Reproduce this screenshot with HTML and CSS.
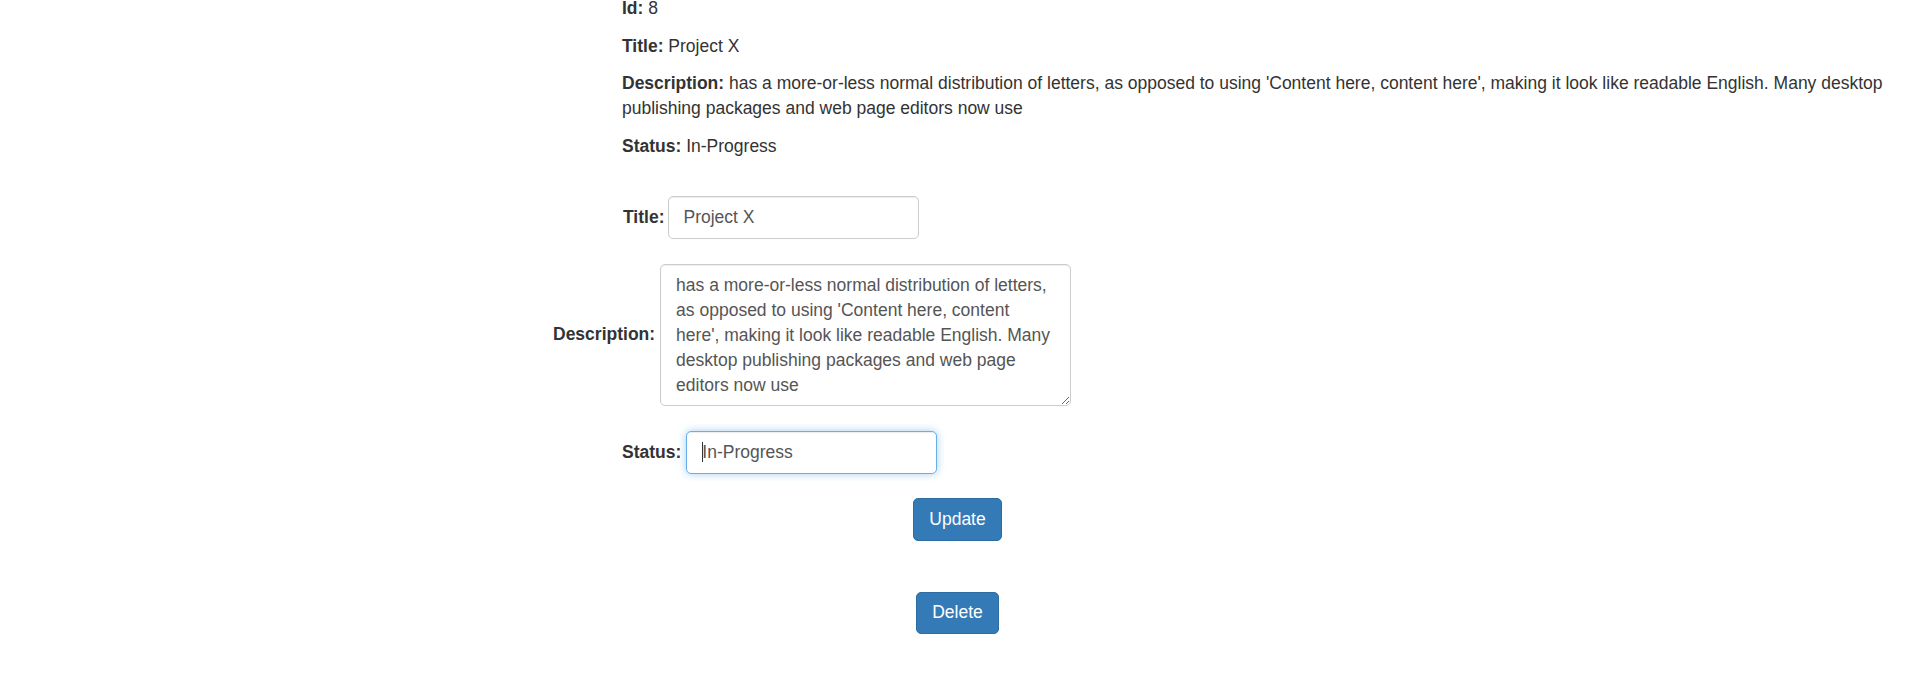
FILE: index.html
```html
<!DOCTYPE html>
<html lang="en">
<head>
<meta charset="utf-8">
<title>Project Details</title>
<link rel="stylesheet" href="styles.css">
</head>
<body>
<div class="page">
  <div class="info">
    <p><strong>Id:</strong> 8</p>
    <p><strong>Title:</strong> Project X</p>
    <p><strong>Description:</strong> has a more-or-less normal distribution of letters, as opposed to using 'Content here, content here', making it look like readable English. Many desktop publishing packages and web page editors now use</p>
    <p><strong>Status:</strong> In-Progress</p>
  </div>
  <form class="edit">
    <div class="field field-title">
      <label class="lbl" for="title">Title:</label>
      <input class="ctrl ctrl-short" id="title" type="text" value="Project X">
    </div>
    <div class="field field-desc">
      <label class="lbl" for="desc">Description:</label>
      <textarea class="ctrl ctrl-area" id="desc" rows="5">has a more-or-less normal distribution of letters, as opposed to using 'Content here, content here', making it look like readable English. Many desktop publishing packages and web page editors now use</textarea>
    </div>
    <div class="field field-status">
      <label class="lbl" for="status">Status:</label>
      <span class="focus-wrap">
        <input class="ctrl ctrl-short ctrl-focus" id="status" type="text" value="In-Progress">
        <span class="caret"></span>
      </span>
    </div>
    <div class="actions actions-update">
      <button class="btn" type="button">Update</button>
    </div>
    <div class="actions actions-delete">
      <button class="btn" type="button">Delete</button>
    </div>
  </form>
</div>
</body>
</html>
```

FILE: styles.css
```css
* { box-sizing: border-box; }
html, body {
  margin: 0;
  padding: 0;
  background: #fff;
}
body {
  font-family: "Liberation Sans", Arial, Helvetica, sans-serif;
  font-size: 17.5px;
  line-height: 25px;
  color: #333;
}
.page {
  width: 1915px;
}
.info {
  margin-left: 622px;
  width: 1280px;
  margin-top: -4px;
}
.info p {
  margin: 0 0 12.5px 0;
}
.info strong { font-weight: bold; }

.edit {
  display: flex;
  flex-direction: column;
  align-items: flex-start;
  margin-top: 37.5px;
}
.field {
  display: flex;
  align-items: center;
}
.lbl {
  font-weight: bold;
  color: #333;
}
.field-title { margin-left: 623px; gap: 3px; }
.field-desc { margin-left: 553px; gap: 5px; margin-top: 25.5px; }
.field-status { margin-left: 622px; gap: 5px; margin-top: 25.5px; }

.ctrl {
  font-family: "Liberation Sans", Arial, Helvetica, sans-serif;
  font-size: 17.5px;
  line-height: 25px;
  color: #555;
  background: #fff;
  border: 1.25px solid #ccc;
  border-radius: 5px;
  padding: 7.5px 15px;
  box-shadow: inset 0 1px 1px rgba(0,0,0,0.075);
  outline: none;
  margin: 0;
}
.ctrl-short {
  width: 251px;
  height: 42.5px;
  display: block;
}
.ctrl-area {
  width: 411px;
  height: 141.5px;
  display: block;
}
.ctrl-focus {
  border-color: #66afe9;
  box-shadow: inset 0 1px 1px rgba(0,0,0,0.075), 0 0 8px rgba(102,175,233,0.6);
}
.focus-wrap {
  position: relative;
  display: block;
}
.caret {
  position: absolute;
  left: 16px;
  top: 11px;
  width: 1px;
  height: 20px;
  background: #333;
}

.actions {
  align-self: stretch;
  display: flex;
  justify-content: center;
}
.actions-update { margin-top: 24.5px; }
.actions-delete { margin-top: 51px; }
.btn {
  font-family: "Liberation Sans", Arial, Helvetica, sans-serif;
  font-size: 17.5px;
  line-height: 25px;
  color: #fff;
  background: #337ab7;
  border: 1.25px solid #2e6da4;
  border-radius: 5px;
  padding: 7.5px 15px;
  height: 42.5px;
  cursor: pointer;
  margin: 0;
}
```
